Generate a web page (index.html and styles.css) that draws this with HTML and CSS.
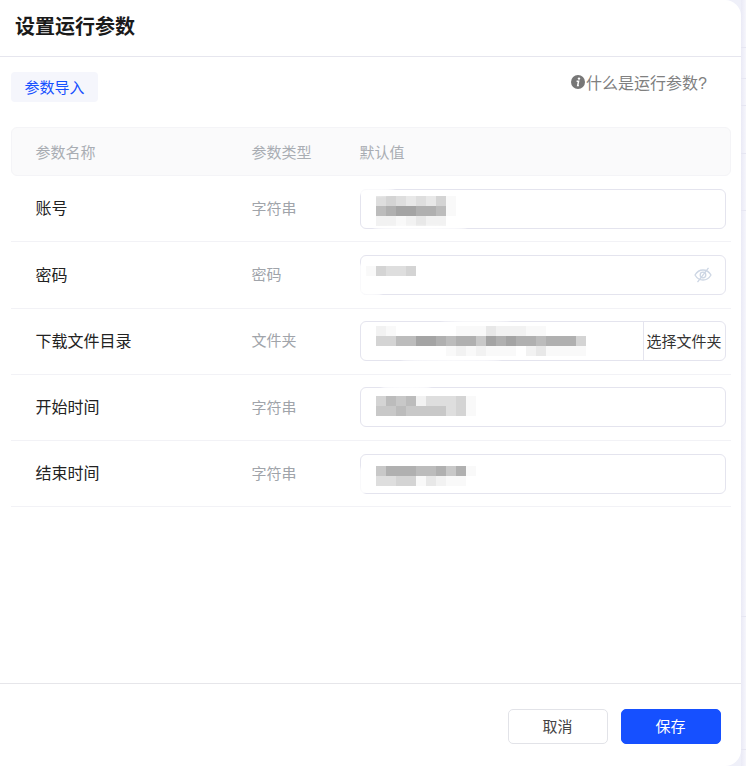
FILE: index.html
```html
<!DOCTYPE html>
<html lang="zh-CN">
<head>
  <meta charset="UTF-8" />
  <meta name="viewport" content="width=device-width, initial-scale=1.0"/>
  <title>设置运行参数</title>
  <link rel="stylesheet" href="styles.css">
</head>
<body>
  <div class="dialog">
    <div class="dialog-header">设置运行参数</div>

    <div class="dialog-body">
      <div class="toolbar">
        <button class="import-btn">参数导入</button>
        <div class="help">
          <svg class="help-icon" viewBox="0 0 14 14" width="14" height="14">
            <circle cx="7" cy="7" r="7" fill="#777"/>
            <circle cx="8" cy="3.6" r="1.2" fill="#fff"/>
            <path d="M5.6 6.2h2L6.7 10.4h1.2" fill="none" stroke="#fff" stroke-width="1.5"/>
          </svg>
          <span>什么是运行参数?</span>
        </div>
      </div>

      <div class="param-head">
        <div>参数名称</div>
        <div>参数类型</div>
        <div>默认值</div>
      </div>

      <div class="param-row">
        <div class="param-name">账号</div>
        <div class="param-type">字符串</div>
        <div class="field">
          <div class="mosaic top-7">
            <i class="m6"></i><i class="m5"></i><i class="m6"></i><i class="m7"></i><i class="m6"></i><i class="m7"></i><i class="m5"></i><i class="m9"></i>
            <i class="m3"></i><i class="m2"></i><i class="m1"></i><i class="m1"></i><i class="m2"></i><i class="m2"></i><i class="m3"></i><i class="m9"></i>
            <i class="m8"></i><i class="m8"></i><i class="m9"></i><i class="m8"></i><i class="m7"></i><i class="m8"></i><i class="m8"></i><i></i>
          </div>
          <span class="smudge smudge-a1"></span>
          <span class="smudge smudge-a2"></span>
        </div>
      </div>

      <div class="param-row">
        <div class="param-name">密码</div>
        <div class="param-type">密码</div>
        <div class="field">
          <div class="mosaic top-11 shift">
            <i class="m9"></i><i class="m5"></i><i class="m6"></i><i class="m6"></i><i class="m5"></i>
          </div>
          <svg class="eye" viewBox="0 0 18 16" width="18" height="16" fill="none" stroke="#cdd6e4" stroke-width="1.3">
            <path d="M1 8c2-3.400 4.800-5 8-5s6 1.600 8 5c-2 3.400-4.800 5-8 5S3 11.400 1 8z"/>
            <circle cx="9" cy="8" r="2.800"/>
            <path d="M14.500 .8L3.500 15.200"/>
          </svg>
          <span class="smudge smudge-b1"></span>
          <span class="smudge smudge-b2"></span>
        </div>
      </div>

      <div class="param-row">
        <div class="param-name">下载文件目录</div>
        <div class="param-type">文件夹</div>
        <div class="field field-folder">
          <div class="mosaic mosaic-wide top-5">
            <i class="m8"></i><i class="m9"></i><i></i><i></i><i></i><i></i><i></i><i></i><i class="m9"></i><i class="m9"></i><i class="m9"></i><i class="m7"></i><i class="m8"></i><i class="m8"></i><i class="m8"></i><i class="m9"></i><i class="m9"></i><i></i><i></i><i></i><i></i>
            <i class="m5"></i><i class="m5"></i><i class="m3"></i><i class="m3"></i><i class="m1"></i><i class="m1"></i><i class="m2"></i><i class="m3"></i><i class="m2"></i><i class="m2"></i><i class="m4"></i><i class="m1"></i><i class="m2"></i><i class="m1"></i><i class="m2"></i><i class="m2"></i><i class="m3"></i><i class="m2"></i><i class="m2"></i><i class="m2"></i><i class="m5"></i>
            <i></i><i></i><i></i><i></i><i></i><i></i><i></i><i class="m9"></i><i class="m8"></i><i class="m9"></i><i class="m8"></i><i class="m9"></i><i class="m9"></i><i class="m9"></i><i></i><i class="m8"></i><i class="m7"></i><i class="m9"></i><i class="m9"></i><i class="m9"></i><i class="m9"></i>
          </div>
          <button class="folder-btn">选择文件夹</button>
          <span class="smudge smudge-c1"></span>
          <span class="smudge smudge-c2"></span>
        </div>
      </div>

      <div class="param-row">
        <div class="param-name">开始时间</div>
        <div class="param-type">字符串</div>
        <div class="field">
          <div class="mosaic mosaic-ten top-9">
            <i class="m5"></i><i class="m3"></i><i class="m4"></i><i class="m3"></i><i class="m8"></i><i class="m6"></i><i class="m6"></i><i class="m6"></i><i class="m5"></i><i class="m9"></i>
            <i class="m4"></i><i class="m4"></i><i class="m3"></i><i class="m4"></i><i class="m4"></i><i class="m4"></i><i class="m4"></i><i class="m6"></i><i class="m5"></i><i class="m9"></i>
          </div>
          <span class="smudge smudge-d1"></span>
        </div>
      </div>

      <div class="param-row">
        <div class="param-name">结束时间</div>
        <div class="param-type">字符串</div>
        <div class="field">
          <div class="mosaic mosaic-ten top-12">
            <i class="m4"></i><i class="m2"></i><i class="m2"></i><i class="m2"></i><i class="m3"></i><i class="m3"></i><i class="m2"></i><i class="m4"></i><i class="m2"></i><i class="m9"></i>
            <i class="m6"></i><i class="m6"></i><i class="m5"></i><i class="m5"></i><i class="m9"></i><i class="m7"></i><i class="m8"></i><i class="m9"></i><i class="m9"></i><i></i>
          </div>
          <span class="smudge smudge-e1"></span>
        </div>
      </div>
    </div>

    <div class="dialog-footer">
      <button class="btn">取消</button>
      <button class="btn btn-primary">保存</button>
    </div>
  </div>
  <div class="backdrop-strip"></div>
</body>
</html>
```

FILE: styles.css
```css
* {
  box-sizing: border-box;
}
html, body {
  margin: 0;
  height: 766px;
  overflow: hidden;
}
body {
  display: flex;
  font-family: "Noto Sans CJK SC", "Noto Sans", sans-serif;
  background: #eff0f9;
  color: #222;
}
button {
  font-family: inherit;
  cursor: pointer;
}
.dialog {
  width: 741px;
  height: 766px;
  flex: none;
  display: flex;
  flex-direction: column;
  background: #fff;
  border-radius: 0 16px 16px 0;
}
.backdrop-strip {
  flex: 1;
  background:
    linear-gradient(#e6e6f2, #e6e6f2) 0 47px / 100% 1px no-repeat,
    linear-gradient(#e6e6f2, #e6e6f2) 0 78px / 100% 1px no-repeat,
    linear-gradient(#e6e6f2, #e6e6f2) 0 105px / 100% 1px no-repeat,
    linear-gradient(#e6e6f2, #e6e6f2) 0 153px / 100% 1px no-repeat,
    linear-gradient(#e6e6f2, #e6e6f2) 0 210px / 100% 1px no-repeat,
    linear-gradient(#e6e6f2, #e6e6f2) 0 616px / 100% 1px no-repeat,
    linear-gradient(#e6e6f2, #e6e6f2) 0 749px / 100% 1px no-repeat,
    linear-gradient(90deg, #eaeaf6, #f6f6fc);
}
.dialog-header {
  height: 57px;
  flex: none;
  padding: 0 15px 5px;
  display: flex;
  align-items: center;
  font-size: 20px;
  font-weight: 700;
  color: #1a1a1a;
  border-bottom: 1px solid #e6e6ee;
}
.dialog-body {
  flex: 1;
  padding: 0 10px 0 11px;
}
.toolbar {
  height: 70px;
  padding-top: 15px;
  display: flex;
  justify-content: space-between;
  align-items: flex-start;
}
.import-btn {
  width: 87px;
  height: 30px;
  padding: 0 0 2px;
  border: 0;
  border-radius: 4px;
  background: #f5f6fc;
  color: #1650ff;
  font-size: 15px;
}
.help {
  display: flex;
  align-items: center;
  height: 20px;
  margin-right: 24px;
  font-family: "Liberation Sans", "Noto Sans CJK SC", sans-serif;
  font-size: 16px;
  color: #808080;
}
.help-icon {
  flex: none;
  margin-right: 1.500px;
}
.param-head {
  display: grid;
  grid-template-columns: 216px 108px 1fr;
  align-items: center;
  height: 49.1px;
  padding-left: 23.500px;
  background: #fafafb;
  border: 1px solid #f4f4f7;
  border-radius: 6px;
  font-size: 15px;
  color: #a9adb3;
}
.param-row {
  display: grid;
  grid-template-columns: 216px 108.500px 366px;
  align-items: center;
  height: 66.25px;
  padding-left: 24.500px;
  border-bottom: 1px solid #f2f2f6;
}
.param-name {
  padding-bottom: 2.500px;
  font-size: 16px;
  color: #222;
}
.param-type {
  padding-bottom: 2.500px;
  font-size: 15px;
  color: #a0a4aa;
}
.field {
  position: relative;
  height: 40px;
  padding-left: 15px;
  border: 1px solid #e4e4ee;
  border-radius: 6px;
  background: #fff;
}
.field-folder {
  display: flex;
  justify-content: space-between;
}
.mosaic {
  display: grid;
  grid-template-columns: repeat(8, 10px);
  grid-auto-rows: 10px;
}
.mosaic-wide {
  grid-template-columns: repeat(21, 10px);
}
.mosaic-ten {
  grid-template-columns: repeat(10, 10px);
}
.mosaic.shift {
  grid-template-columns: repeat(5, 10px);
  margin-left: -10px;
}
.top-5 { margin-top: 4px; }
.top-7 { margin-top: 6px; }
.top-9 { margin-top: 8px; }
.top-11 { margin-top: 10px; }
.top-12 { margin-top: 11px; }
.m1 { background: #a4a4a4; }
.m2 { background: #b0b0b0; }
.m3 { background: #bcbcbc; }
.m4 { background: #c8c8c8; }
.m5 { background: #d4d4d4; }
.m6 { background: #dedede; }
.m7 { background: #e8e8e8; }
.m8 { background: #f2f2f2; }
.m9 { background: #f9f9f9; }
.eye {
  position: absolute;
  right: 13px;
  top: 11px;
}
.folder-btn {
  flex: none;
  width: 82px;
  padding: 0 1px 2px 0;
  border: 0;
  border-left: 1px solid #e4e4ee;
  background: transparent;
  font-size: 15px;
  color: #333;
}
/* white retouching marks that run over the input borders */
.smudge {
  position: absolute;
  background: #fff;
  border-radius: 50%;
  opacity: .8;
  filter: blur(1px);
}
.smudge-a1 { left: -6px; top: -3px; width: 40px; height: 9px; }
.smudge-a2 { left: 12px; bottom: -3px; width: 94px; height: 5px; }
.smudge-b1 { left: -5px; top: 8px; width: 10px; height: 30px; }
.smudge-b2 { left: -3px; bottom: -2px; width: 24px; height: 4px; }
.smudge-c1 { left: 80px; top: -2px; width: 70px; height: 3px; }
.smudge-c2 { left: 40px; bottom: -2px; width: 100px; height: 4px; }
.smudge-d1 { left: 20px; top: -3px; width: 50px; height: 5px; }
.smudge-e1 { left: -4px; bottom: -2px; width: 10px; height: 28px; }
.dialog-footer {
  height: 83px;
  flex: none;
  padding: 25px 20px 0 0;
  display: flex;
  justify-content: flex-end;
  gap: 13px;
  border-top: 1px solid #e6e6ea;
}
.btn {
  width: 100px;
  height: 35px;
  padding: 0 1px 2px 0;
  border: 1px solid #e2e3e8;
  border-radius: 5px;
  background: #fff;
  font-size: 15px;
  color: #444;
}
.btn-primary {
  border-color: #1650ff;
  background: #1650ff;
  color: #fff;
}
```
